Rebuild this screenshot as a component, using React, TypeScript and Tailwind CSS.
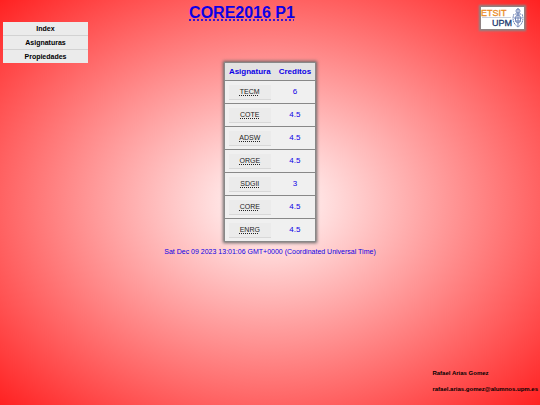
const menu = ["Index", "Asignaturas", "Propiedades"];

const asignaturas = [
  { name: "TECM", creditos: "6" },
  { name: "COTE", creditos: "4.5" },
  { name: "ADSW", creditos: "4.5" },
  { name: "ORGE", creditos: "4.5" },
  { name: "SDGII", creditos: "3" },
  { name: "CORE", creditos: "4.5" },
  { name: "ENRG", creditos: "4.5" },
];

function Logo() {
  return (
    <svg
      viewBox="0 0 43 22"
      className="mt-[7px] h-[22px] w-[43px] shrink-0 bg-white font-['Liberation_Sans',Arial,sans-serif] shadow-[0_0_2px_2px_#888]"
      role="img"
      aria-label="ETSIT UPM"
    >
      <path d="M1 10.5H30" stroke="#a9aec2" strokeWidth="0.6" />
      <text x="0" y="9" fontSize="9" fill="#ea8a24" stroke="#ea8a24" strokeWidth="0.3">
        ETSIT
      </text>
      <text x="11" y="19" fontSize="9" fill="#20396f" stroke="#20396f" strokeWidth="0.3">
        UPM
      </text>
      <g fill="none" stroke="#6f83b5" strokeWidth="1">
        <circle cx="37" cy="4" r="2" />
        <path d="M37 1V20M34 7H40" />
        <ellipse cx="37" cy="12" rx="2.6" ry="4" />
        <path d="M33 7C31 11 32 17 37 20C42 17 43 11 41 7" strokeDasharray="1.8 0.5" />
        <path d="M33 11H41M34 14H40" />
      </g>
    </svg>
  );
}

export default function App() {
  return (
    <div className="flex min-h-screen flex-col bg-[radial-gradient(#fff,#f00_115%)] font-['Liberation_Sans',Arial,sans-serif] text-[#0d00e6]">
      <header className="flex h-[22px] items-start pr-4 pl-[3px]">
        <h1 className="flex-1 pt-1 text-center text-[16px] leading-[18px] font-bold">
          <a href="#inicio" className="underline decoration-dotted underline-offset-2">
            CORE2016 P1
          </a>
        </h1>
        <Logo />
      </header>

      <nav className="ml-[3px] w-[85px] bg-[#ebebeb]">
        <ul className="divide-y divide-[#d2d2d2]">
          {menu.map((item) => (
            <li key={item}>
              <a
                href={`#${item.toLowerCase()}`}
                className="block text-center text-[7px] leading-[13px] font-bold text-black"
              >
                {item}
              </a>
            </li>
          ))}
        </ul>
      </nav>

      <main className="-mt-px flex flex-col items-center">
        <table className="border-collapse border border-[#888] bg-[#f0f0f0] text-center text-[8px] leading-[10px] shadow-[0_0_3px_1px_#666]">
          <thead>
            <tr className="h-[18px] bg-[#e3e3e3]">
              <th className="px-1">Asignatura</th>
              <th className="px-1">Creditos</th>
            </tr>
          </thead>
          <tbody>
            {asignaturas.map((a) => (
              <tr key={a.name} className="h-[23px] border-t border-[#888]">
                <td className="px-1">
                  <button
                    type="button"
                    className="block h-[15px] w-full border-b border-[#d8d8d8] bg-[#ebebeb] text-[7px] leading-[14px] text-[#222] underline decoration-dotted"
                  >
                    {a.name}
                  </button>
                </td>
                <td className="px-1">{a.creditos}</td>
              </tr>
            ))}
          </tbody>
        </table>
        <p className="mt-[5px] text-[7px] leading-[10px]">
          Sat Dec 09 2023 13:01:06 GMT+0000 (Coordinated Universal Time)
        </p>
      </main>

      <footer className="mt-auto flex flex-col gap-2 self-end pr-[2px] pb-3 text-[6px] leading-[8px] font-bold text-black">
        <p>Rafael Arias Gomez</p>
        <p>rafael.arias.gomez@alumnos.upm.es</p>
      </footer>
    </div>
  );
}
